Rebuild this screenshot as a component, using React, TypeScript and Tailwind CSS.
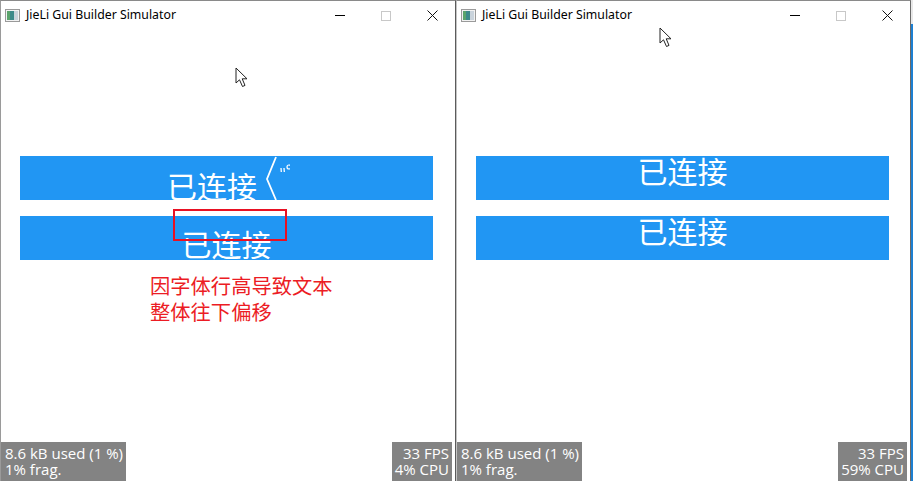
const cjk = { fontFamily: '"Noto Sans CJK SC", "Noto Sans", sans-serif' }
const ui = { fontFamily: '"Noto Sans", "Open Sans", sans-serif' }
const lv = { fontFamily: '"Open Sans", "Noto Sans", sans-serif' }

function AppIcon() {
  return (
    <svg width="15" height="13" viewBox="0 0 15 13" aria-hidden="true">
      <rect x="0.5" y="0.5" width="14" height="12" fill="#f2f2f2" stroke="#9a9a9a" />
      <rect x="2" y="2" width="7" height="9" fill="#3d8a8a" />
      <rect x="9" y="2" width="4" height="9" fill="#c9d3dc" />
      <rect x="2" y="2" width="3" height="9" fill="#5aa46c" />
    </svg>
  )
}

function Cursor({ x, y }: { x: number; y: number }) {
  return (
    <svg
      className="absolute"
      style={{ left: x, top: y }}
      width="16"
      height="22"
      viewBox="0 0 16 22"
      aria-hidden="true"
    >
      <path
        d="M1 1 L1 16 L4.5 12.8 L7.5 19.5 L10 18.4 L7.2 11.8 L12 11.8 Z"
        fill="#fff"
        stroke="#222"
        strokeWidth="1"
        strokeLinejoin="round"
      />
    </svg>
  )
}

function TitleBar() {
  return (
    <div className="h-[29px] flex items-center bg-white shrink-0">
      <div className="ml-[4px] mr-[6px] flex items-center">
        <AppIcon />
      </div>
      <span className="text-[12.3px] text-black" style={ui}>
        JieLi Gui Builder Simulator
      </span>
      <div className="ml-auto flex items-center h-full">
        <div className="w-[46px] h-full flex items-center justify-center">
          <div className="w-[10px] h-px bg-black" />
        </div>
        <div className="w-[46px] h-full flex items-center justify-center">
          <div className="w-[10px] h-[10px] border border-[#c8c8c8]" />
        </div>
        <div className="w-[46px] h-full flex items-center justify-center">
          <svg width="11" height="11" viewBox="0 0 11 11" aria-hidden="true">
            <path d="M0.5 0.5 L10.5 10.5 M10.5 0.5 L0.5 10.5" stroke="#111" strokeWidth="1" />
          </svg>
        </div>
      </div>
    </div>
  )
}

function Glitch() {
  return (
    <svg width="33" height="44" viewBox="0 0 33 44" aria-hidden="true" className="shrink-0">
      <path d="M19 1 L10 23 L19 44" fill="none" stroke="#fff" strokeWidth="1.8" />
      <path d="M24 12 L24.3 16 M27 12 L27.3 16" stroke="#fff" strokeWidth="1.3" />
      <circle cx="32" cy="11" r="2" fill="none" stroke="#fff" strokeWidth="1.2" />
    </svg>
  )
}

function Bar({ offset, glitch }: { offset: string; glitch?: boolean }) {
  return (
    <div className={`ml-[19px] w-[413px] h-[44px] bg-[#2196f3] overflow-hidden flex justify-center ${glitch ? 'pl-[4px]' : ''}`}>
      <span className={`text-[30px] leading-[28px] text-white ${offset}`} style={cjk}>
        已连接
      </span>
      {glitch && <Glitch />}
    </div>
  )
}

function Window({
  broken,
  cpu,
  cursor,
  className,
}: {
  broken?: boolean
  cpu: string
  cursor: { x: number; y: number }
  className: string
}) {
  return (
    <div className={`relative h-full flex flex-col bg-white border-t border-[#8a8a8a] ${className}`}>
      <TitleBar />
      <div className="flex-1 flex flex-col">
        <div className="mt-[126px]">
          <Bar offset={broken ? 'pt-[15px]' : 'pt-0'} glitch={broken} />
        </div>
        <div className="mt-[16px]">
          <Bar offset={broken ? 'pt-[13px]' : 'pt-0'} />
        </div>
        {broken && (
          <div className="mt-[12px] ml-[149px] text-[20.3px] leading-[26px] text-[#ec1c24]" style={cjk}>
            <div>因字体行高导致文本</div>
            <div>整体往下偏移</div>
          </div>
        )}
        <div className="mt-auto h-[39px] flex justify-between items-stretch text-white text-[15px] leading-[16px]" style={lv}>
          <div className="bg-[#838383] pl-[4px] pr-[3px] pt-[3px]">
            <div>8.6 kB used (1 %)</div>
            <div>1% frag.</div>
          </div>
          <div className="bg-[#838383] pl-[3px] pr-[3px] pt-[3px] mr-[3px] text-right">
            <div>33 FPS</div>
            <div>{cpu}</div>
          </div>
        </div>
      </div>
      {broken && (
        <div className="absolute left-[172px] top-[208px] w-[114px] h-[32px] border-2 border-[#e81123]" />
      )}
      <Cursor x={cursor.x} y={cursor.y} />
    </div>
  )
}

export default function App() {
  return (
    <div className="w-[913px] h-[481px] flex bg-[#0078d7] overflow-hidden">
      <Window
        broken
        cpu="4% CPU"
        cursor={{ x: 234, y: 66 }}
        className="w-[456px] shrink-0 border-l border-r border-l-[#9a9a9a] border-r-[#5c5c5c]"
      />
      <Window
        cpu="59% CPU"
        cursor={{ x: 202, y: 26 }}
        className="w-[455px] shrink-0 border-l border-r border-l-[#c4c4c4] border-r-[#6a6a6a]"
      />
      <div className="flex-1 flex flex-col">
        <div className="h-[24px] bg-[#e8e8e8]" />
        <div className="flex-1 bg-[#1d7fd1]" />
      </div>
    </div>
  )
}
